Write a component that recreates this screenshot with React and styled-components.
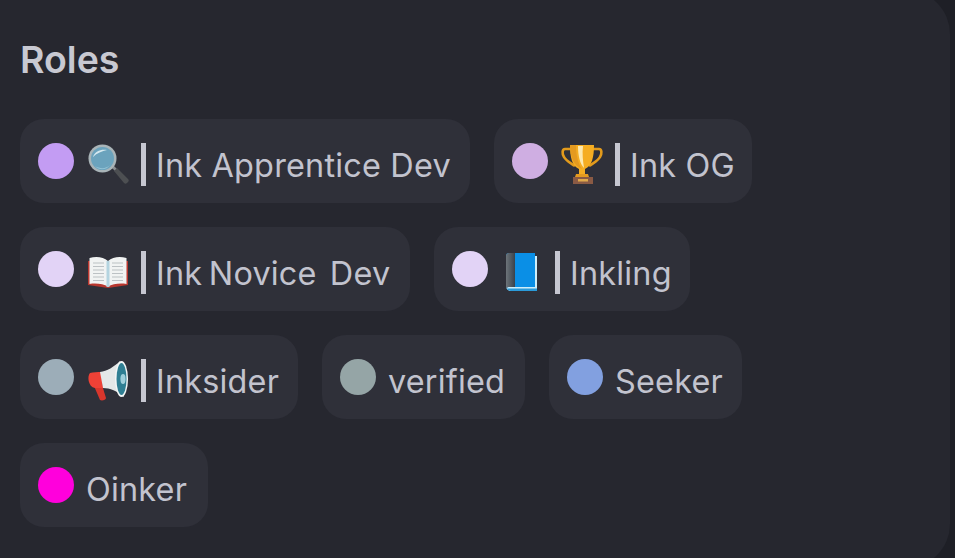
import React from 'react'
import styled, { createGlobalStyle } from 'styled-components'

const GlobalStyle = createGlobalStyle`
  html, body {
    margin: 0;
    height: 100%;
    overflow: hidden;
    background: #1e1f26;
    font-family: Inter, "Noto Sans", "Liberation Sans", sans-serif;
  }
`

const Panel = styled.section`
  box-sizing: border-box;
  width: 950px;
  height: 578px;
  margin-top: -10px;
  padding: 44px 20px 0 20px;
  background: #26272f;
  border-radius: 0 44px 44px 0;
`

const Title = styled.h2`
  margin: 0 0 33px 0;
  font-size: 37.5px;
  line-height: 52px;
  font-weight: 600;
  color: #c8c9d2;
`

const RoleList = styled.div`
  display: flex;
  flex-wrap: wrap;
  gap: 24px;
`

const Chip = styled.div`
  box-sizing: border-box;
  display: flex;
  align-items: center;
  width: ${p => p.$width}px;
  height: 84px;
  padding: 0 18px;
  background: #2f3039;
  border-radius: 24px;
`

const Dot = styled.span`
  flex: none;
  width: 36px;
  height: 36px;
  border-radius: 50%;
  background: ${p => p.$color};
`

const Emoji = styled.svg`
  flex: none;
  width: 42px;
  height: 42px;
  margin: 6px 0 0 13px;
`

const Bar = styled.span`
  flex: none;
  width: 5px;
  height: 43px;
  margin: 6px 10px 0 12px;
  background: #c6c7d1;
`

const Name = styled.span`
  margin: 10px 0 0 ${p => (p.$plain ? '12px' : '0')};
  font-size: 32.4px;
  line-height: 44px;
  letter-spacing: 0.2px;
  word-spacing: ${p => p.$wordGap || 0}px;
  white-space: pre;
  color: #c2c3ce;
`

const Magnifier = () => (
  <Emoji viewBox="0 0 42 42">
    <path d="M24 24l2-2 4 4-2 2z" fill="#8b8e91" />
    <path d="M27 28l3-3 11 11c1 1 1 2 0 3l-1 1c-1 1-2 1-3 0z" fill="#4d4f52" />
    <circle cx="15.5" cy="15.5" r="14" fill="#a9b4b8" />
    <circle cx="15.5" cy="15.5" r="11.5" fill="#6ba3bd" />
    <path d="M6 14c2-6 8-8 14-7-5 1-10 3-14 7z" fill="#d5e8ef" />
    <path d="M8 23c5 3 11 3 15-1-3 5-11 6-15 1z" fill="#93c3d6" />
  </Emoji>
)

const Trophy = () => (
  <Emoji viewBox="0 0 42 42">
    <path d="M10 6H4c-3 0-3 5-1 8 2 4 7 6 11 9M32 6h6c3 0 3 5 1 8-2 4-7 6-11 9" fill="none" stroke="#e29a1c" strokeWidth="2.6" />
    <path d="M9 2h24c0 12-2 21-9 24v6h-6v-6C11 23 9 14 9 2z" fill="#f5ad22" />
    <path d="M9 2h6c0 10 2 18 6 24-8-3-12-12-12-24z" fill="#e49a20" />
    <path d="M17 3h5c-1 8 0 15 1 22-4-4-6-12-6-22z" fill="#fde9b0" />
    <path d="M15 31h12l1 3H14z" fill="#e49a20" />
    <path d="M12 34h20v7H12z" fill="#8a5a44" />
    <path d="M17 36h10v2.500H17z" fill="#e0a94a" />
  </Emoji>
)

const OpenBook = () => (
  <Emoji viewBox="0 0 42 42">
    <path d="M1 10h40v24l-20 3-20-3z" fill="#b8372f" />
    <path d="M2.500 7c7-2 14-1 18.500 3 4.500-4 11.500-5 18.500-3v26c-7-1-14 0-18.500 2.500-4.500-2.500-11.500-3.500-18.500-2.500z" fill="#f1f3f3" />
    <path d="M6 12h11M6 15.500h11M6 19h11M6 22.500h11M6 26h11M6 29.500h11M25 12h11M25 15.500h11M25 19h11M25 22.500h11M25 26h11M25 29.500h11" stroke="#bcc1c4" strokeWidth="1.2" />
    <path d="M19.500 10h3v26h-3z" fill="#b4d4e0" />
  </Emoji>
)

const BlueBook = () => (
  <Emoji viewBox="0 0 42 42">
    <defs>
      <linearGradient id="spine" x1="0" x2="1" y1="0" y2="0">
        <stop offset="0" stopColor="#6d747a" />
        <stop offset="1" stopColor="#39424b" />
      </linearGradient>
    </defs>
    <path d="M8 5h28v35H10c-3 0-5-2-5-5V8z" fill="#cdeefa" />
    <path d="M5 5c0-2 1-3 3-3h26v34H9c-2 0-4 .500-4 2z" fill="#0a8fe6" />
    <path d="M5 5c0-2 1-3 3-3h6v34H9c-2 0-4 .500-4 2z" fill="url(#spine)" />
    <path d="M6 37.500h30V40H10c-2 0-4-1-4-2.500z" fill="#2a9ad9" />
  </Emoji>
)

const Megaphone = () => (
  <Emoji viewBox="0 0 42 42">
    <path d="M7 27l8-1 4 13c0 2-4 3-6 2z" fill="#d8362c" />
    <path d="M3 14c3-1 8-1 11-1l2 16-8 0c-7-1-8-12-5-15z" fill="#ee4136" />
    <path d="M13 13C20 12 27 8 33 2l4 36c-7-6-14-9-21-9z" fill="#e4e8e8" />
    <ellipse cx="34.500" cy="20" rx="6.500" ry="18" fill="#f3f6f6" />
    <ellipse cx="34.500" cy="20" rx="5" ry="16" fill="#2f7f93" />
    <ellipse cx="36" cy="20" rx="2.600" ry="5" fill="#9fd0dc" />
  </Emoji>
)

const roles = [
  { color: '#c39cf3', icon: <Magnifier />, name: 'Ink Apprentice Dev', width: 450 },
  { color: '#cfaee2', icon: <Trophy />, name: 'Ink OG', width: 258 },
  { color: '#e2d3f6', icon: <OpenBook />, name: 'Ink Novice  Dev', width: 390, wordGap: -2.7 },
  { color: '#e2d3f6', icon: <BlueBook />, name: 'Inkling', width: 256 },
  { color: '#9cadb8', icon: <Megaphone />, name: 'Inksider', width: 278 },
  { color: '#95a5a6', name: 'verified', width: 203 },
  { color: '#82a0e0', name: 'Seeker', width: 193 },
  { color: '#ff00dc', name: 'Oinker', width: 188 },
]

export default function App() {
  return (
    <>
      <GlobalStyle />
      <Panel>
        <Title>Roles</Title>
        <RoleList>
          {roles.map(role => (
            <Chip key={role.name} $width={role.width}>
              <Dot $color={role.color} />
              {role.icon}
              {role.icon && <Bar />}
              <Name $plain={!role.icon} $wordGap={role.wordGap}>{role.name}</Name>
            </Chip>
          ))}
        </RoleList>
      </Panel>
    </>
  )
}
